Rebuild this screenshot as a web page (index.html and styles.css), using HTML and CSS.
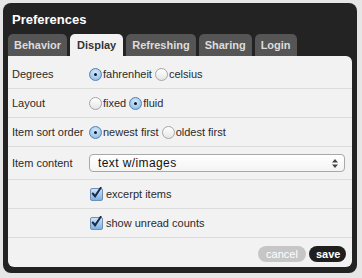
FILE: index.html
```html
<!DOCTYPE html>
<html>
<head>
    <title>Preferences</title>
    <meta charset="utf-8">
    <link rel="stylesheet" href="styles.css">
</head>
<body>
    <div class="dialog">
        <div class="title">Preferences</div>
        <div class="tabs">
            <div class="tab">Behavior</div>
            <div class="tab active">Display</div>
            <div class="tab">Refreshing</div>
            <div class="tab">Sharing</div>
            <div class="tab">Login</div>
        </div>
        <div class="panel">
            <div class="row">
                <div class="label">Degrees</div>
                <div class="field">
                    <span class="opt"><span class="radio on"></span>fahrenheit</span>
                    <span class="opt"><span class="radio"></span>celsius</span>
                </div>
            </div>
            <div class="row">
                <div class="label">Layout</div>
                <div class="field">
                    <span class="opt"><span class="radio"></span>fixed</span>
                    <span class="opt"><span class="radio on"></span>fluid</span>
                </div>
            </div>
            <div class="row">
                <div class="label">Item sort order</div>
                <div class="field">
                    <span class="opt"><span class="radio on"></span>newest first</span>
                    <span class="opt"><span class="radio"></span>oldest first</span>
                </div>
            </div>
            <div class="row tall">
                <div class="label">Item content</div>
                <div class="field">
                    <div class="select">
                        <span>text w/images</span>
                        <svg class="arrows" width="6" height="9" viewBox="0 0 6 9"><path d="M3 0 L6 3.5 L0 3.5 Z M0 5.5 L6 5.5 L3 9 Z" fill="#444"/></svg>
                    </div>
                </div>
            </div>
            <div class="row">
                <div class="label"></div>
                <div class="field">
                    <span class="opt"><span class="check"><svg width="13" height="13" viewBox="0 0 13 13"><path d="M3 6.5 L5.5 9.5 L11.5 0.5" fill="none" stroke="#1c2a4a" stroke-width="2.2" stroke-linecap="round"/></svg></span>excerpt items</span>
                </div>
            </div>
            <div class="row">
                <div class="label"></div>
                <div class="field">
                    <span class="opt"><span class="check"><svg width="13" height="13" viewBox="0 0 13 13"><path d="M3 6.5 L5.5 9.5 L11.5 0.5" fill="none" stroke="#1c2a4a" stroke-width="2.2" stroke-linecap="round"/></svg></span>show unread counts</span>
                </div>
            </div>
            <div class="footer">
                <button class="btn cancel">cancel</button>
                <button class="btn save">save</button>
            </div>
        </div>
    </div>
</body>
</html>
```

FILE: styles.css
```css
*{
    padding: 0;
    margin: 0;
    box-sizing: border-box;
}
body{
    background: #e6e6e6;
    font-family: "Liberation Sans", Arial, sans-serif;
    width: 362px;
    height: 278px;
    overflow: hidden;
}
.dialog{
    margin: 3px 0 0 3px;
    width: 354px;
    background: #232323;
    border-radius: 8px;
    padding: 0 5px 6px 5px;
}
.title{
    height: 31px;
    color: #ffffff;
    font-weight: 700;
    font-size: 13px;
    padding: 9px 0 0 4px;
}
.tabs{
    display: flex;
    gap: 3px;
    height: 22px;
}
.tab{
    background: #555555;
    color: #dddddd;
    font-weight: 700;
    font-size: 11px;
    line-height: 22px;
    padding: 0 6px;
    border-radius: 5px 5px 0 0;
}
.tab.active{
    background: #f2f2f2;
    color: #333333;
    padding: 0 7px;
}
.panel{
    background: #f2f2f2;
    border-radius: 0 6px 6px 6px;
    padding: 4px 0 0 0;
}
.row{
    display: flex;
    align-items: center;
    height: 29px;
    border-bottom: 1px solid #dcdcdc;
    font-size: 11px;
    color: #2a2a2a;
}
.row.tall{
    height: 33px;
}
.label{
    width: 81px;
    padding-left: 4px;
}
.field{
    flex: 1;
    display: flex;
    align-items: center;
    gap: 3px;
    padding-right: 7px;
}
.opt{
    display: flex;
    align-items: center;
}
.radio{
    width: 13px;
    height: 13px;
    border-radius: 50%;
    border: 1px solid #a5a5a5;
    background: linear-gradient(#ffffff, #e6e6e6);
    margin-right: 1px;
    position: relative;
}
.radio.on{
    border-color: #5b7fae;
    background: radial-gradient(circle at 50% 35%, #d6ebfb, #7fb3e3);
}
.radio.on::after{
    content: "";
    position: absolute;
    left: 4px;
    top: 4px;
    width: 3px;
    height: 3px;
    border-radius: 50%;
    background: #0d1a2b;
}
.check{
    width: 13px;
    height: 13px;
    border: 1px solid #6d8fb8;
    border-radius: 2px;
    background: linear-gradient(#cfe5f8, #7db0e0);
    margin: 0 3px 0 1px;
    display: flex;
}
.check svg{
    margin: -2px 0 0 -1px;
}
.select{
    flex: 1;
    height: 18px;
    border: 1px solid #a8a8a8;
    border-radius: 4px;
    background: linear-gradient(#ffffff, #f4f4f4);
    display: flex;
    align-items: center;
    justify-content: space-between;
    padding: 0 6px 0 8px;
    font-size: 12px;
    letter-spacing: 0.4px;
    color: #111111;
}
.footer{
    display: flex;
    justify-content: flex-end;
    gap: 3px;
    height: 29px;
    align-items: center;
    padding: 2px 6px 0 0;
}
.btn{
    border: 0;
    height: 16px;
    border-radius: 8px;
    font-family: "Liberation Sans", Arial, sans-serif;
    font-size: 11px;
    color: #ffffff;
    padding: 0 7px;
}
.cancel{
    background: #c6c6c6;
    width: 48px;
}
.save{
    background: #1f1f1f;
    font-weight: 700;
    width: 37px;
}
```
